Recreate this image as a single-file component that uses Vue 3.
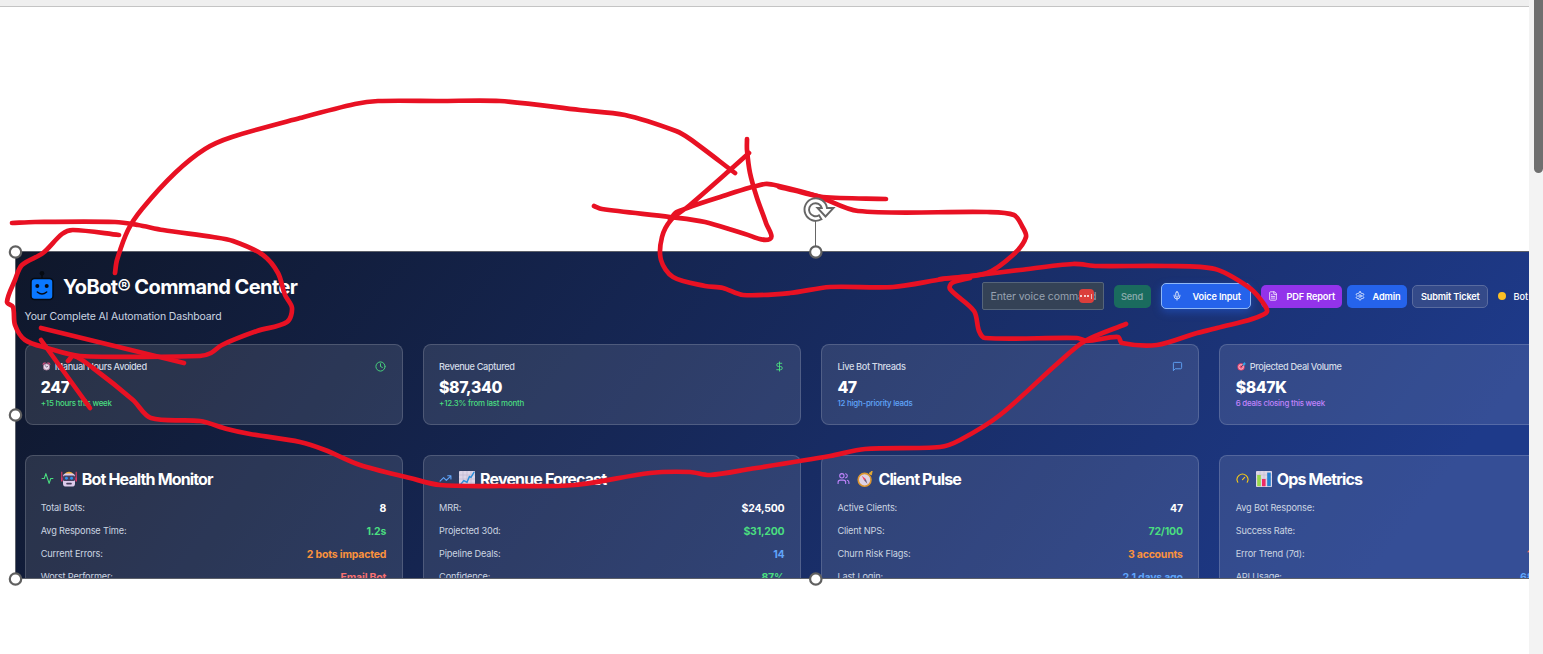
<script setup>
const stats = [
  { label: 'Manual Hours Avoided', value: '247', note: '+15 hours this week', tone: 'green', icon: 'clock', emoji: 'alarm' },
  { label: 'Revenue Captured', value: '$87,340', note: '+12.3% from last month', tone: 'green', icon: 'dollar' },
  { label: 'Live Bot Threads', value: '47', note: '12 high-priority leads', tone: 'blue', icon: 'message' },
  { label: 'Projected Deal Volume', value: '$847K', note: '6 deals closing this week', tone: 'purple', emoji: 'target' }
]
const panels = [
  { title: 'Bot Health Monitor', icon: 'activity', emoji: 'robot', tone: 'green', rows: [
    ['Total Bots:', '8', 'white'], ['Avg Response Time:', '1.2s', 'green'], ['Current Errors:', '2 bots impacted', 'orange'], ['Worst Performer:', 'Email Bot', 'red']] },
  { title: 'Revenue Forecast', icon: 'trend', emoji: 'chart', tone: 'blue', rows: [
    ['MRR:', '$24,500', 'white'], ['Projected 30d:', '$31,200', 'green'], ['Pipeline Deals:', '14', 'blue'], ['Confidence:', '87%', 'green']] },
  { title: 'Client Pulse', icon: 'users', emoji: 'compass', tone: 'purple', rows: [
    ['Active Clients:', '47', 'white'], ['Client NPS:', '72/100', 'green'], ['Churn Risk Flags:', '3 accounts', 'orange'], ['Last Login:', '2.1 days ago', 'blue']] },
  { title: 'Ops Metrics', icon: 'gauge', emoji: 'bars', tone: 'yellow', rows: [
    ['Avg Bot Response:', '', 'white'], ['Success Rate:', '', 'green'], ['Error Trend (7d):', '1', 'red edge'], ['API Usage:', '68%', 'blue edge wide']] }
]
const icons = {
  clock: 'M22 12a10 10 0 1 1-20 0a10 10 0 1 1 20 0M12 6v6l4 2',
  dollar: 'M12 2v20M17 5H9.5a3.5 3.5 0 0 0 0 7h5a3.5 3.5 0 0 1 0 7H6',
  message: 'M21 15a2 2 0 0 1-2 2H7l-4 4V5a2 2 0 0 1 2-2h14a2 2 0 0 1 2 2z',
  activity: 'M22 12h-4l-3 9L9 3l-3 9H2',
  trend: 'M22 7l-8.500 8.500-5-5L2 17M16 7h6v6',
  users: 'M16 21v-2a4 4 0 0 0-4-4H6a4 4 0 0 0-4 4v2M13 7a4 4 0 1 1-8 0a4 4 0 1 1 8 0M22 21v-2a4 4 0 0 0-3-3.870M16 3.130a4 4 0 0 1 0 7.750',
  gauge: 'M12 14l4-4M3.340 19a10 10 0 1 1 17.320 0'
}
const strokes = [
  [[12,223],[35,222],[115,222],[138,225],[163,230],[213,237],[233,241],[263,255],[278,273],[285,295],[292,308],[287,322],[257,331],[222,345],[211,353],[200,356],[80,356],[47,348],[25,340],[15,325],[13,307],[7,302],[15,280],[22,265],[43,253],[62,234],[73,230],[119,235]],
  [[115,273],[117,260],[128,230],[142,209],[175,173],[205,149],[232,137],[300,118],[355,104],[378,101],[440,101],[500,101],[580,110],[625,115],[676,131],[690,139],[735,173]],
  [[594,206],[602,209],[670,217],[705,222],[745,234],[770,239],[766,223],[757,198],[750,173],[747,150],[747,139]],
  [[749,153],[730,170],[690,205],[671,220],[662,237],[661,260],[673,277],[705,286],[723,288],[743,295],[790,293],[830,287],[893,287],[943,279],[987,273],[1014,254],[1026,237],[1022,226],[1014,215],[987,212],[858,211],[817,196],[779,186],[765,184],[723,196],[677,212],[670,220]],
  [[779,187],[800,192],[823,197],[886,199]],
  [[940,279],[970,276],[1020,270],[1073,264],[1097,266],[1167,266],[1215,269],[1247,286],[1261,300],[1266,313],[1217,328],[1197,333],[1157,345],[1122,343],[1118,337],[1087,341],[1077,338],[985,338],[979,331],[974,311],[950,289],[952,283],[970,278]],
  [[1126,324],[1085,341],[1058,363],[1000,415],[960,440],[940,447],[865,449],[830,456],[750,469],[710,475],[690,472],[650,473],[575,485],[500,486],[440,485],[410,478],[360,465],[325,450],[300,442],[250,434],[227,429],[200,421],[151,418],[133,400],[93,368],[74,356],[68,361]],
  [[41,328],[184,363]],
  [[41,340],[90,408]]
]
const smooth = p => {
  let d = `M${p[0]}`
  for (let i = 0; i < p.length - 1; i++) {
    const a = p[i - 1] || p[i], b = p[i], c = p[i + 1], e = p[i + 2] || c
    const len = Math.hypot(c[0] - b[0], c[1] - b[1]) * 0.3
    const n1 = Math.hypot(c[0] - a[0], c[1] - a[1]) || 1
    const n2 = Math.hypot(e[0] - b[0], e[1] - b[1]) || 1
    d += `C${b[0] + (c[0] - a[0]) / n1 * len} ${b[1] + (c[1] - a[1]) / n1 * len} ${c[0] - (e[0] - b[0]) / n2 * len} ${c[1] - (e[1] - b[1]) / n2 * len} ${c}`
  }
  return d
}
const inkPaths = strokes.map(smooth)
const handles = [[15.500, 252], [815.800, 252], [15.500, 415], [15.500, 579], [815.800, 579]]
</script>

<template>
  <div class="stage">
    <svg class="defs" width="0" height="0" aria-hidden="true">
      <symbol id="e-alarm" viewBox="0 0 20 20"><path d="M4 18l3-3M16 18l-3-3" stroke="#b8a5bd" stroke-width="2" /><circle cx="10" cy="11" r="7" fill="#e8dcec" stroke="#a87d9b" stroke-width="2" /><path d="M2 6q1-4 6-4M18 6q-1-4-6-4" stroke="#d14b7d" stroke-width="3" fill="none" /><path d="M7 8l3 3 3-1" stroke="#5f4868" stroke-width="2" fill="none" /></symbol>
      <symbol id="e-target" viewBox="0 0 20 20"><circle cx="9" cy="11" r="8" fill="#ef476f" /><circle cx="9" cy="11" r="5" fill="none" stroke="#f5dfe8" stroke-width="1.800" /><path d="M9 11l6-6" stroke="#33496a" stroke-width="2" /><path d="M13 4l4-4 1 3 2 1-4 4h-3z" fill="#2ba3e3" /></symbol>
      <symbol id="e-robot" viewBox="0 0 20 20"><path d="M1 1v10M19 1v10" stroke="#e83c68" stroke-width="1.300" /><path d="M4 4q6-6 12 0z" fill="#f3b13b" /><rect x="2.500" y="3" width="15" height="16.500" rx="4" fill="#dccbea" /><rect x="2.500" y="5.500" width="15" height="7" rx="2" fill="#45415e" /><circle cx="6.800" cy="9" r="1.800" fill="#2c91ed" /><circle cx="13.200" cy="9" r="1.800" fill="#2c91ed" /><rect x="6.500" y="14.800" width="7" height="2" rx="1" fill="#473e5c" /><path d="M1 8v5M19 8v5" stroke="#d63669" stroke-width="2" /></symbol>
      <symbol id="e-chart" viewBox="0 0 20 20"><rect width="20" height="20" rx="1" fill="#ddd5e7" /><path d="M5 0v20M10 0v20M15 0v20M0 5h20M0 10h20M0 15h20" stroke="#bdb4cc" stroke-width=".7" /><path d="M1 18l5-6 4 2 3-7 2 1 4-7" fill="none" stroke="#298edb" stroke-width="1.800" /></symbol>
      <symbol id="e-compass" viewBox="0 0 20 20"><circle cx="9.500" cy="11" r="8" fill="#ded2e5" stroke="#dc962f" stroke-width="2" /><path d="M15 3l4-3-1 5z" fill="#e9ad31" stroke="#e9ad31" /><path d="M6 6l5 4-2 2z" fill="#ef3d60" /><path d="M13 16l-4-4 2-2z" fill="#6b5c77" /></symbol>
      <symbol id="e-bars" viewBox="0 0 20 20"><rect width="20" height="20" rx="1" fill="#ded6e6" /><path d="M5 0v20M10 0v20M15 0v20M0 5h20M0 10h20" stroke="#c4bacd" stroke-width=".7" /><rect x="1.500" y="5" width="4.500" height="14" fill="#98d84b" /><rect x="7.500" y="10" width="4.500" height="9" fill="#ed2b66" /><rect x="14" y="2" width="4.500" height="17" fill="#237fd0" /></symbol>
    </svg>

    <main class="canvas">
      <div class="topbar"></div>
      <section class="dashboard">
        <header class="header">
          <div class="brand">
            <div class="brand-row">
              <svg class="logo" viewBox="0 0 24 31">
                <path d="M12 4v6" stroke="#050a12" stroke-width="1.400" /><circle cx="12" cy="3.200" r="2.300" fill="#050a12" />
                <rect x="1" y="8.500" width="22" height="21" rx="3.500" fill="#0a78ff" stroke="#050a12" stroke-width="1.500" />
                <circle cx="7.300" cy="16" r="2" fill="#050a12" /><circle cx="16.700" cy="16" r="2" fill="#050a12" />
                <path d="M7.300 22q4.700 4 9.400 0" fill="none" stroke="#050a12" stroke-width="1.400" stroke-linecap="round" />
              </svg>
              <h1>YoBot® Command Center</h1>
            </div>
            <p>Your Complete AI Automation Dashboard</p>
          </div>
          <div class="toolbar">
            <div class="field"><span>Enter voice command</span><i class="badge"><b></b><b></b><b></b><em></em></i></div>
            <button class="send">Send</button>
            <button class="voice">
              <svg class="ic" viewBox="0 0 24 24"><path d="M12 2a3 3 0 0 0-3 3v7a3 3 0 0 0 6 0V5a3 3 0 0 0-3-3zM19 10v2a7 7 0 0 1-14 0v-2M12 19v3" /></svg><span>Voice Input</span>
            </button>
            <button class="pdf">
              <svg class="ic" viewBox="0 0 24 24"><path d="M15 2H6a2 2 0 0 0-2 2v16a2 2 0 0 0 2 2h12a2 2 0 0 0 2-2V7zM14 2v6h6M16 13H8M16 17H8M10 9H8" /></svg><span>PDF Report</span>
            </button>
            <button class="admin">
              <svg class="ic" viewBox="0 0 24 24"><path d="M12.220 2h-.44a2 2 0 0 0-2 2v.18a2 2 0 0 1-1 1.730l-.43.25a2 2 0 0 1-2 0l-.15-.08a2 2 0 0 0-2.730.73l-.22.38a2 2 0 0 0 .73 2.730l.15.1a2 2 0 0 1 1 1.720v.51a2 2 0 0 1-1 1.740l-.15.09a2 2 0 0 0-.73 2.730l.22.38a2 2 0 0 0 2.730.73l.15-.08a2 2 0 0 1 2 0l.43.25a2 2 0 0 1 1 1.730V20a2 2 0 0 0 2 2h.44a2 2 0 0 0 2-2v-.18a2 2 0 0 1 1-1.730l.43-.25a2 2 0 0 1 2 0l.15.08a2 2 0 0 0 2.730-.73l.22-.39a2 2 0 0 0-.73-2.730l-.15-.08a2 2 0 0 1-1-1.740v-.5a2 2 0 0 1 1-1.740l.15-.09a2 2 0 0 0 .73-2.730l-.22-.38a2 2 0 0 0-2.730-.73l-.15.08a2 2 0 0 1-2 0l-.43-.25a2 2 0 0 1-1-1.730V4a2 2 0 0 0-2-2z" /><circle cx="12" cy="12" r="3" /></svg><span>Admin</span>
            </button>
            <button class="ticket">Submit Ticket</button>
            <i class="dot"></i><span class="bot">Bot</span>
          </div>
        </header>

        <div class="grid stats">
          <article v-for="s in stats" :key="s.label" class="card stat">
            <div class="stat-head">
              <svg v-if="s.emoji" class="mini"><use :href="'#e-' + s.emoji" /></svg>
              <span>{{ s.label }}</span>
              <svg v-if="s.icon" class="ic stat-icon" :class="s.tone" viewBox="0 0 24 24"><path :d="icons[s.icon]" /></svg>
            </div>
            <strong>{{ s.value }}</strong>
            <small :class="s.tone">{{ s.note }}</small>
          </article>
        </div>

        <div class="grid panels">
          <article v-for="p in panels" :key="p.title" class="card panel">
            <h2>
              <svg class="ic" :class="p.tone" viewBox="0 0 24 24"><path :d="icons[p.icon]" /></svg>
              <svg class="emoji"><use :href="'#e-' + p.emoji" /></svg>
              <span>{{ p.title }}</span>
            </h2>
            <div v-for="r in p.rows" :key="r[0]" class="row"><span>{{ r[0] }}</span><b :class="r[2]">{{ r[1] }}</b></div>
          </article>
        </div>
      </section>
    </main>
    <aside class="scroll"><div class="thumb"></div></aside>

    <svg class="overlay" viewBox="0 0 1543 654">
      <path v-for="(d, i) in inkPaths" :key="i" :d="d" class="ink" />
      <path d="M815.500 221v25" class="stem" />
      <circle v-for="(h, i) in handles" :key="i" :cx="h[0]" :cy="h[1]" r="5.700" class="handle" />
      <path d="M827 208A11.300 11.300 0 1 0 821.500 219.300L819 215.200A6.500 6.500 0 1 1 821.800 208H817.500L825.500 216.500L833.500 208Z" class="rotate" />
    </svg>
  </div>
</template>

<style>
html, body { margin: 0; overflow: hidden; background: #fff; }
</style>
<style scoped>
* { box-sizing: border-box; }
.stage { position: relative; width: 1543px; height: 654px; display: flex; overflow: hidden; background: #fff; font-family: Inter, "Liberation Sans", sans-serif; }
.defs { position: absolute; }
.canvas { width: 1529px; height: 654px; overflow: hidden; flex: none; }
.topbar { height: 7px; background: #efefef; border-bottom: 1px solid #c4c4c4; }
.scroll { width: 14px; background: #f3f3f3; display: flex; justify-content: flex-end; }
.thumb { width: 9px; height: 173px; background: #6f6f6f; border-radius: 0 0 5px 5px; }
.dashboard { margin: 244px 0 0 15px; width: 1514px; height: 328px; overflow: hidden; border: 1px solid #5c6069; border-right: 0; padding: 0 0 0 8.500px; background: linear-gradient(to bottom right, #0f172a, #1e3a8a 50%, #1e3a8a) 0 0 / 1600px 2100px; color: #fff; }
.header { height: 92px; display: flex; white-space: nowrap; }
.brand { width: 957px; flex: none; padding-top: 19px; }
.brand-row { display: flex; align-items: flex-start; height: 34px; padding-left: 5.500px; }
.logo { width: 24px; height: 31px; flex: none; margin-top: -1px; }
h1 { margin: 3px 0 0 9px; font-size: 20px; line-height: 27px; font-weight: 700; letter-spacing: -.6px; }
p { margin: 4px 0 0; font-size: 10.500px; line-height: 15px; color: #cbd5e1; letter-spacing: -.17px; }
.toolbar { display: flex; align-items: center; height: 88px; flex: none; }
.field { width: 122px; height: 28px; border: 1px solid #56657a; border-radius: 2px; background: #344256; color: #98a2b1; font-size: 10.500px; letter-spacing: -.1px; display: flex; align-items: center; padding-left: 8px; position: relative; }
.badge { position: absolute; right: 9px; top: 6px; width: 15px; height: 14px; border-radius: 4px; background: #db3e3b; display: flex; align-items: center; justify-content: center; gap: 1.500px; }
.badge b { width: 2px; height: 2px; background: #fff; border-radius: 1px; }
.badge em { width: 1px; height: 5px; background: #e9bcbc; }
button { height: 23px; border: 0; padding: 0; border-radius: 5px; color: #fff; font: 600 9.200px Inter, "Liberation Sans", sans-serif; letter-spacing: -.15px; display: flex; align-items: center; justify-content: center; flex: none; white-space: nowrap; }
.ic { fill: none; stroke: currentColor; stroke-width: 2; stroke-linecap: round; stroke-linejoin: round; flex: none; }
button .ic { width: 10px; height: 10px; stroke-width: 1.900; }
.send { width: 37px; margin-left: 10px; background: #1a6b5e; color: #84a7a8; }
.voice { width: 90px; height: 26px; margin-left: 10px; padding-left: 2px; background: #2563eb; border: 1px solid #8fb8f6; gap: 10.500px; box-shadow: 0 3px 8px rgba(37,99,235,.45); }
.pdf { width: 81px; margin-left: 10px; padding-left: 1px; background: #9333ea; gap: 8.500px; }
.admin { width: 60px; margin-left: 5.500px; padding-left: 1px; background: #2563eb; gap: 8px; }
.ticket { width: 75.500px; margin-left: 5px; padding-left: 1px; background: #344a89; border: 1px solid #596b9f; letter-spacing: -.2px; }
.dot { width: 8px; height: 8px; border-radius: 50%; background: #fbbf24; margin-left: 10px; }
.bot { font-size: 9.200px; font-weight: 500; margin-left: 8px; }
.grid { display: grid; grid-template-columns: repeat(4, 378px); column-gap: 20.300px; width: 1573px; }
.card { background: rgba(255,255,255,.105); border: 1px solid rgba(255,255,255,.16); border-radius: 8px; padding: 0 15.300px; }
.stat { height: 81px; padding-top: 13px; display: flex; flex-direction: column; }
.stat-head { height: 16px; display: flex; align-items: center; font-size: 9.200px; font-weight: 500; color: #d3dbe7; letter-spacing: -.36px; }
.mini { width: 9px; height: 9px; margin: 0 4px 0 1px; }
.stat-icon { width: 11px; height: 11px; margin-left: auto; }
strong { font-size: 15.800px; line-height: 20px; height: 20px; margin-top: 4px; font-weight: 800; letter-spacing: -.4px; }
small { font-size: 7.900px; line-height: 11px; font-weight: 500; letter-spacing: -.22px; }
.panels { margin-top: 30px; }
.panel { height: 180px; padding-top: 13.500px; }
h2 { height: 18px; margin: 0 0 8.500px; display: flex; align-items: center; font-size: 16px; font-weight: 700; letter-spacing: -.85px; white-space: nowrap; }
h2 .ic { width: 13px; height: 13px; }
.emoji { width: 16px; height: 16px; margin: 0 5px 0 7px; }
.row { height: 23px; display: flex; justify-content: space-between; font-size: 9.200px; line-height: 23px; color: #cbd5e1; letter-spacing: -.16px; }
.row b { font-size: 10.500px; line-height: 25px; font-weight: 700; letter-spacing: -.2px; }
.green { color: #4ade80; } .blue { color: #60a5fa; } .purple { color: #c084fc; }
.orange { color: #fb923c; } .red { color: #f87171; } .yellow { color: #facc15; } .white { color: #fff; }
.edge { width: 54px; } .wide { width: 61px; }
.overlay { position: absolute; inset: 0; width: 1543px; height: 654px; pointer-events: none; }
.ink { fill: none; stroke: #e81123; stroke-width: 4.700; stroke-linecap: round; stroke-linejoin: round; }
.stem { stroke: #666; stroke-width: 1; }
.handle { fill: #fff; stroke: #606060; stroke-width: 2.200; }
.rotate { fill: #fff; stroke: #666; stroke-width: 1.900; stroke-linejoin: miter; }
</style>
